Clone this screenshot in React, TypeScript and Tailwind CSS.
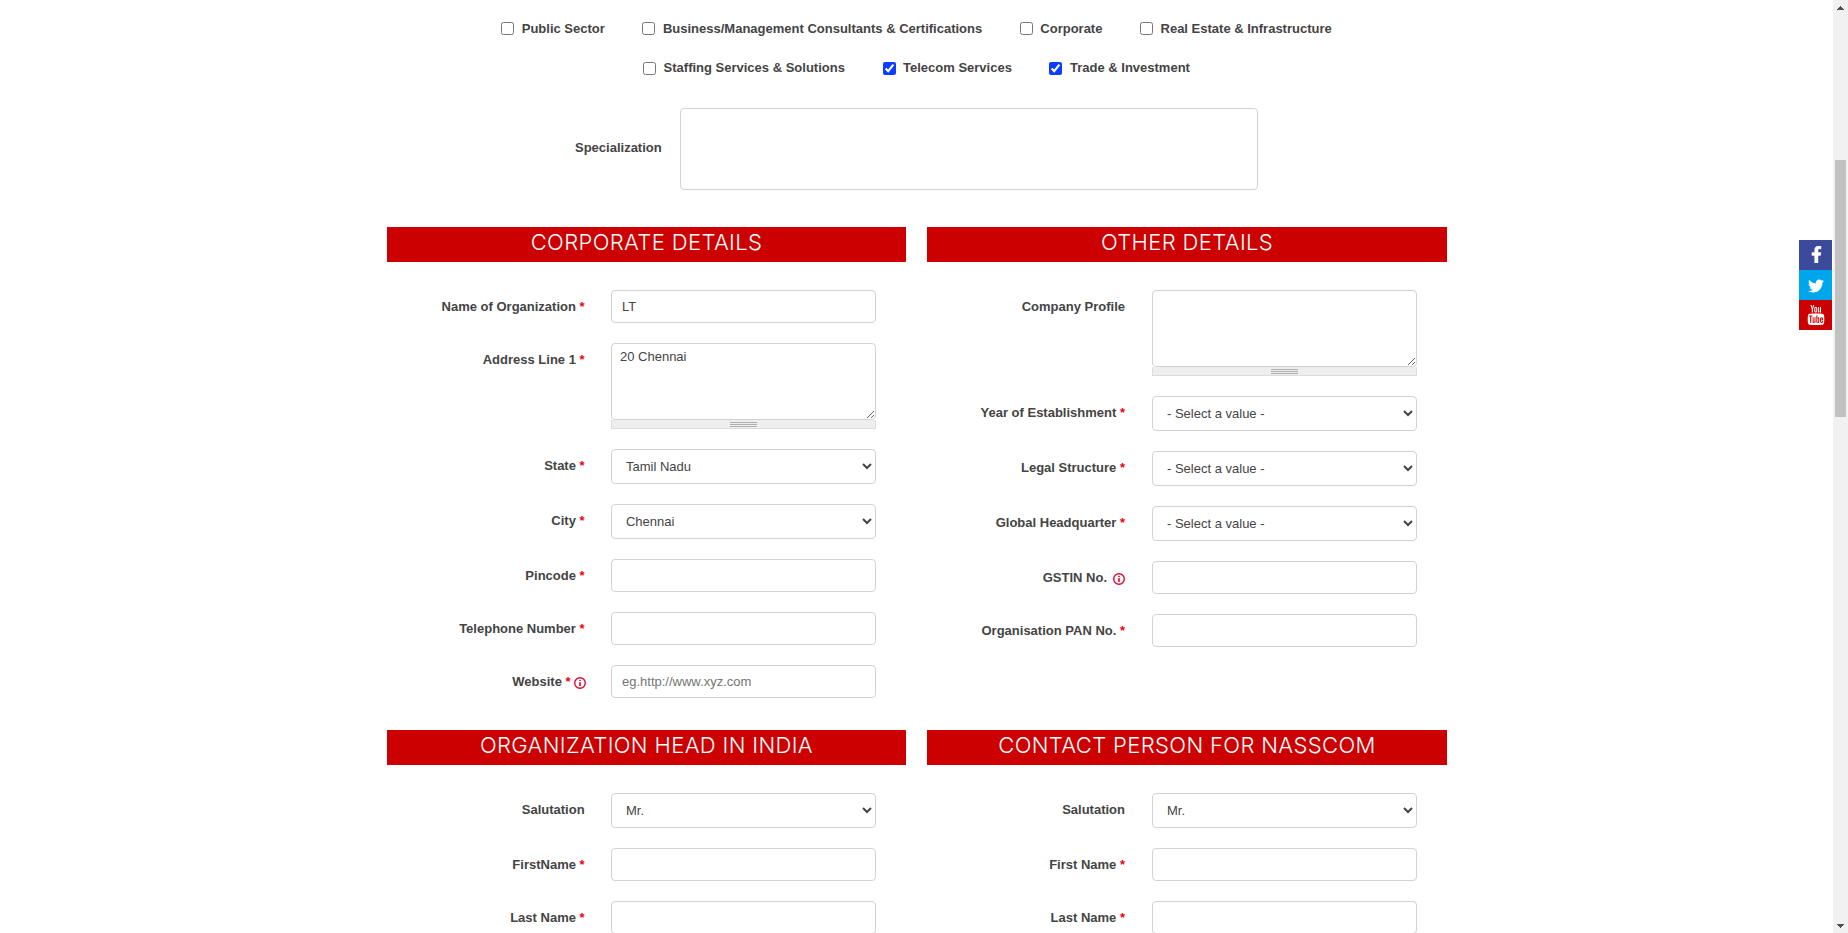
import React from "react";
import { FaFacebookF, FaTwitter } from "react-icons/fa";
import { TfiYoutube } from "react-icons/tfi";

type FieldDef = {
  label: string;
  required?: boolean;
  info?: boolean;
  kind: "input" | "select" | "textarea";
  value?: string;
  placeholder?: string;
};

const rows: { label: string; checked?: boolean }[][] = [
  [
    { label: "Public Sector" },
    { label: "Business/Management Consultants & Certifications" },
    { label: "Corporate" },
    { label: "Real Estate & Infrastructure" },
  ],
  [
    { label: "Staffing Services & Solutions" },
    { label: "Telecom Services", checked: true },
    { label: "Trade & Investment", checked: true },
  ],
];

const corporate: FieldDef[] = [
  { label: "Name of Organization", required: true, kind: "input", value: "LT" },
  { label: "Address Line 1", required: true, kind: "textarea", value: "20 Chennai" },
  { label: "State", required: true, kind: "select", value: "Tamil Nadu" },
  { label: "City", required: true, kind: "select", value: "Chennai" },
  { label: "Pincode", required: true, kind: "input" },
  { label: "Telephone Number", required: true, kind: "input" },
  { label: "Website", required: true, info: true, kind: "input", placeholder: "eg.http://www.xyz.com" },
];

const other: FieldDef[] = [
  { label: "Company Profile", kind: "textarea" },
  { label: "Year of Establishment", required: true, kind: "select", value: "- Select a value -" },
  { label: "Legal Structure", required: true, kind: "select", value: "- Select a value -" },
  { label: "Global Headquarter", required: true, kind: "select", value: "- Select a value -" },
  { label: "GSTIN No.", info: true, kind: "input" },
  { label: "Organisation PAN No.", required: true, kind: "input" },
];

const head: FieldDef[] = [
  { label: "Salutation", kind: "select", value: "Mr." },
  { label: "FirstName", required: true, kind: "input" },
  { label: "Last Name", required: true, kind: "input" },
];

const contact: FieldDef[] = [
  { label: "Salutation", kind: "select", value: "Mr." },
  { label: "First Name", required: true, kind: "input" },
  { label: "Last Name", required: true, kind: "input" },
];

function InfoIcon({ className }: { className: string }) {
  return (
    <svg viewBox="0 0 12 12" className={className} fill="none">
      <circle cx="6" cy="6" r="5.3" stroke="#e0052d" strokeWidth="1.4" />
      <rect x="5.2" y="2.9" width="1.6" height="1.2" fill="#e0052d" />
      <rect x="5.2" y="5.1" width="1.6" height="3.9" fill="#e0052d" />
    </svg>
  );
}

function Control({ field }: { field: FieldDef }) {
  const border = "block w-full rounded border border-[#d2d2d2] bg-white";
  if (field.kind === "select") {
    return (
      <select className={`${border} h-[35px] px-2.5`}>
        <option>{field.value}</option>
      </select>
    );
  }
  if (field.kind === "textarea") {
    return (
      <div>
        <textarea className={`${border} h-[77px] resize px-2 py-1 leading-[18px]`} defaultValue={field.value} />
        <div className="flex h-[9px] flex-col items-center gap-px border border-t-0 border-[#ddd] bg-[#eee] pt-[2px]">
          <span className="h-px w-[27px] bg-[#b0b0b0]" />
          <span className="h-px w-[27px] bg-[#b0b0b0]" />
          <span className="h-px w-[27px] bg-[#b0b0b0]" />
        </div>
      </div>
    );
  }
  return (
    <input
      type="text"
      className={`${border} h-[33px] px-2.5 placeholder:text-[#757575]`}
      defaultValue={field.value}
      placeholder={field.placeholder}
    />
  );
}

function Section({ title, fields, right }: { title: string; fields: FieldDef[]; right?: boolean }) {
  return (
    <section>
      <h2 className="h-[35px] bg-[#cc0000] pt-px text-center font-['Inter'] text-[22px] leading-7 font-light tracking-[0.37px] text-white">
        {title}
      </h2>
      <div className="mt-7 flex flex-col gap-5">
        {fields.map((f) => (
          <div key={f.label} className="flex">
            <div
              className={`flex shrink-0 justify-end pt-[7px] leading-[19px] font-bold ${right ? "w-[198px]" : "w-[197.6px]"}`}
            >
              <span className="whitespace-pre">
                {f.label}
                {f.required && <span className="text-[#ee0011]"> *</span>}
              </span>
              {f.info && (
                <InfoIcon className={f.required ? "mt-[5px] -mr-px ml-[3px] size-3" : "mt-[5px] ml-1.5 size-3"} />
              )}
            </div>
            <div className={right ? "ml-[27px] w-[265px]" : "ml-[26.4px] w-[265px]"}>
              <Control field={f} />
            </div>
          </div>
        ))}
      </div>
    </section>
  );
}

export default function App() {
  return (
    <div className="flex h-[933px] w-[1848px] overflow-hidden bg-white font-['Liberation_Sans',sans-serif] text-[13px] text-[#444]">
      <main className="w-[1833px] shrink-0">
        <div className="flex h-[77px] flex-col gap-[20.3px] pt-[19px]">
          {rows.map((row, i) => (
            <div key={i} className="flex h-[19px] shrink-0 justify-center gap-[37.6px] font-bold">
              {row.map((c) => (
                <label key={c.label} className="flex leading-[19px]">
                  <input
                    type="checkbox"
                    defaultChecked={c.checked}
                    className="mt-[3.3px] mr-[7.5px] size-[13px] accent-[#0d3dff]"
                  />
                  {c.label}
                </label>
              ))}
            </div>
          ))}
        </div>

        <div className="mt-[31px] flex pl-[575px]">
          <label className="w-[105px] pt-[30px] leading-[19px] font-bold">Specialization</label>
          <textarea className="block h-[82px] w-[578px] resize-none rounded border border-[#d2d2d2] bg-white" />
        </div>

        <div className="mt-[37px] grid grid-cols-[519px_520px] gap-x-[21px] gap-y-8 pl-[387px]">
          <Section title="CORPORATE DETAILS" fields={corporate} />
          <Section title="OTHER DETAILS" fields={other} right />
          <Section title="ORGANIZATION HEAD IN INDIA" fields={head} />
          <Section title="CONTACT PERSON FOR NASSCOM" fields={contact} right />
        </div>
      </main>

      <aside className="absolute top-[240px] left-[1799px] flex w-[33px] flex-col text-white">
        <a className="flex h-[30px] items-center justify-center bg-[#3b4a9b] pb-0.5 pl-px">
          <FaFacebookF size={17} stroke="white" strokeWidth={14} />
        </a>
        <a className="flex h-[30px] items-center justify-center bg-[#00a6ec] pt-px">
          <FaTwitter size={16} />
        </a>
        <a className="flex h-[30px] items-center justify-center bg-[#cc0000]">
          <TfiYoutube size={20} />
        </a>
      </aside>

      <div className="flex h-full w-[15px] shrink-0 flex-col items-center justify-between bg-[#f1f1f1]">
        <svg viewBox="0 0 15 15" className="size-[15px]" shapeRendering="crispEdges">
          <path d="M4 10L7.5 6L11 10Z" fill="#505050" />
        </svg>
        <div className="mb-[356px] h-[257px] w-[11px] bg-[#c1c1c1]" />
        <svg viewBox="0 0 15 15" className="size-[15px]" shapeRendering="crispEdges">
          <path d="M4 6L7.5 10L11 6Z" fill="#505050" />
        </svg>
      </div>
    </div>
  );
}
